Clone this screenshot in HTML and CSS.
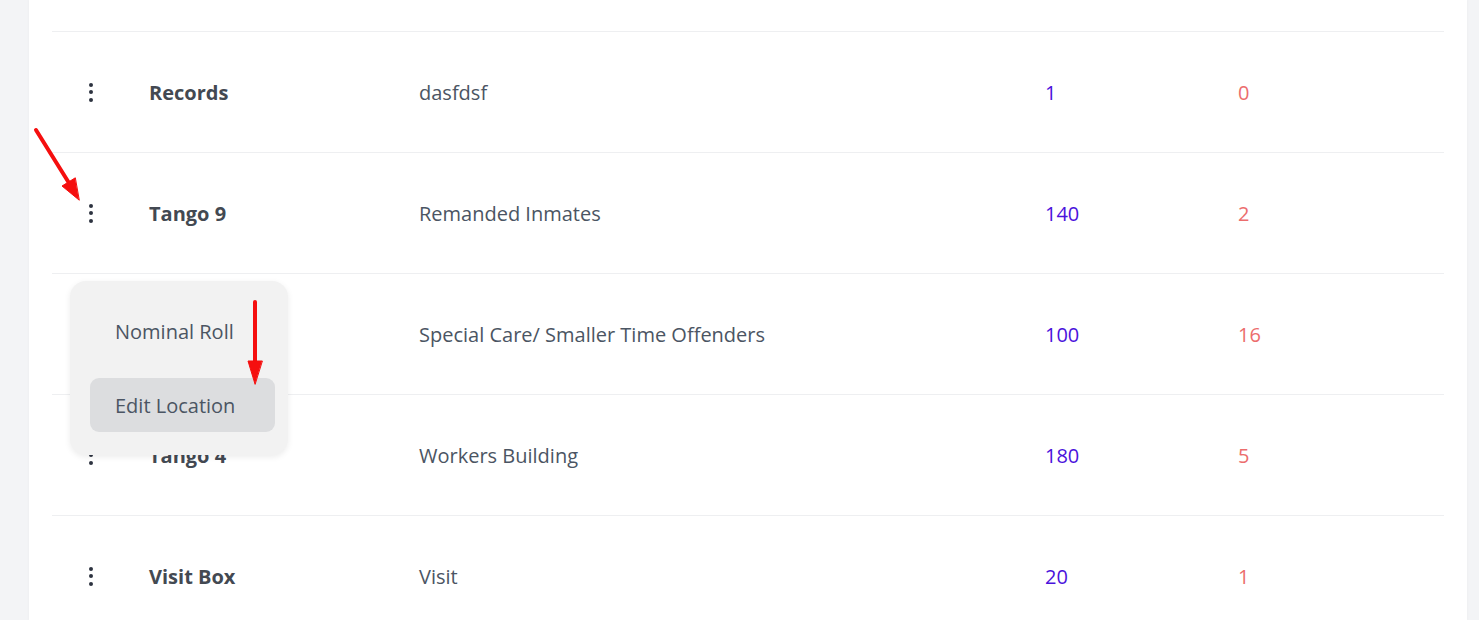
FILE: index.html
```html
<!DOCTYPE html>
<html lang="en">
<head>
<meta charset="utf-8">
<title>Locations</title>
<link rel="stylesheet" href="styles.css">
</head>
<body>
<div class="page">
  <div class="card">
    <div class="table">
      <div class="head"></div>
      <div class="row">
        <div class="cell dots-cell"><span class="dots"><i></i><i></i><i></i></span></div>
        <div class="cell name">Records</div>
        <div class="cell desc">dasfdsf</div>
        <div class="cell cap">1</div>
        <div class="cell occ">0</div>
      </div>
      <div class="row">
        <div class="cell dots-cell"><span class="dots"><i></i><i></i><i></i></span></div>
        <div class="cell name">Tango 9</div>
        <div class="cell desc">Remanded Inmates</div>
        <div class="cell cap">140</div>
        <div class="cell occ">2</div>
      </div>
      <div class="row">
        <div class="cell dots-cell"><span class="dots"><i></i><i></i><i></i></span></div>
        <div class="cell name"></div>
        <div class="cell desc">Special Care/ Smaller Time Offenders</div>
        <div class="cell cap">100</div>
        <div class="cell occ">16</div>
      </div>
      <div class="row">
        <div class="cell dots-cell"><span class="dots"><i></i><i></i><i></i></span></div>
        <div class="cell name">Tango 4</div>
        <div class="cell desc">Workers Building</div>
        <div class="cell cap">180</div>
        <div class="cell occ">5</div>
      </div>
      <div class="row">
        <div class="cell dots-cell"><span class="dots"><i></i><i></i><i></i></span></div>
        <div class="cell name">Visit Box</div>
        <div class="cell desc">Visit</div>
        <div class="cell cap">20</div>
        <div class="cell occ">1</div>
      </div>
    </div>
  </div>

  <div class="menu">
    <div class="menu-item">Nominal Roll</div>
    <div class="menu-item active">Edit Location</div>
  </div>

  <svg class="arrows" width="1479" height="620" viewBox="0 0 1479 620">
    <g stroke="#f50f0f" stroke-width="4" stroke-linecap="round" fill="#f50f0f">
      <line x1="36" y1="130" x2="69" y2="183"/>
      <polygon points="79,200 62,186 75,178" stroke-width="1"/>
      <line x1="255" y1="302" x2="255" y2="363"/>
      <polygon points="255,384 248,361 262,361" stroke-width="1"/>
    </g>
  </svg>
</div>
</body>
</html>
```

FILE: styles.css
```css
* { box-sizing: border-box; }
html, body { margin: 0; padding: 0; }
body {
  background: #f3f4f6;
  font-family: "Segoe UI", "Open Sans", "Noto Sans", sans-serif;
  color: #4b5563;
}
.page {
  position: relative;
  width: 1479px;
  height: 620px;
  overflow: hidden;
}
.card {
  margin-left: 29px;
  width: 1438px;
  height: 620px;
  background: #ffffff;
  padding: 0 23px;
  box-shadow: 0 0 3px rgba(0,0,0,0.04);
}
.head { height: 31px; }
.row {
  display: grid;
  grid-template-columns: 97px 270px 626px 193px 1fr;
  height: 121px;
  border-top: 1px solid #eeeff1;
  align-items: center;
  font-size: 20px;
}
.cell { line-height: 26px; padding-top: 2px; }
.dots-cell { display: flex; justify-content: flex-start; padding-left: 37px; padding-top: 0; }
.dots {
  display: flex;
  flex-direction: column;
  gap: 3.5px;
}
.dots i {
  display: block;
  width: 4px;
  height: 4px;
  border-radius: 50%;
  background: #2d3340;
}
.name { font-weight: 700; color: #434952; }
.desc { color: #4b5563; }
.cap { color: #4a12dc; }
.occ { color: #ec6d6d; }

.menu {
  position: absolute;
  left: 70px;
  top: 281px;
  width: 218px;
  height: 174px;
  background: #f2f2f2;
  border-radius: 16px;
  box-shadow: 0 2px 6px rgba(0,0,0,0.08);
  padding: 23px 13px 23px 20px;
  display: flex;
  flex-direction: column;
  gap: 20px;
}
.menu-item {
  height: 54px;
  display: flex;
  align-items: center;
  padding-left: 25px;
  border-radius: 9px;
  font-size: 20px;
  color: #4b5563;
}
.menu-item.active { background: #dcdddf; }
.arrows {
  position: absolute;
  left: 0;
  top: 0;
  pointer-events: none;
}
```
